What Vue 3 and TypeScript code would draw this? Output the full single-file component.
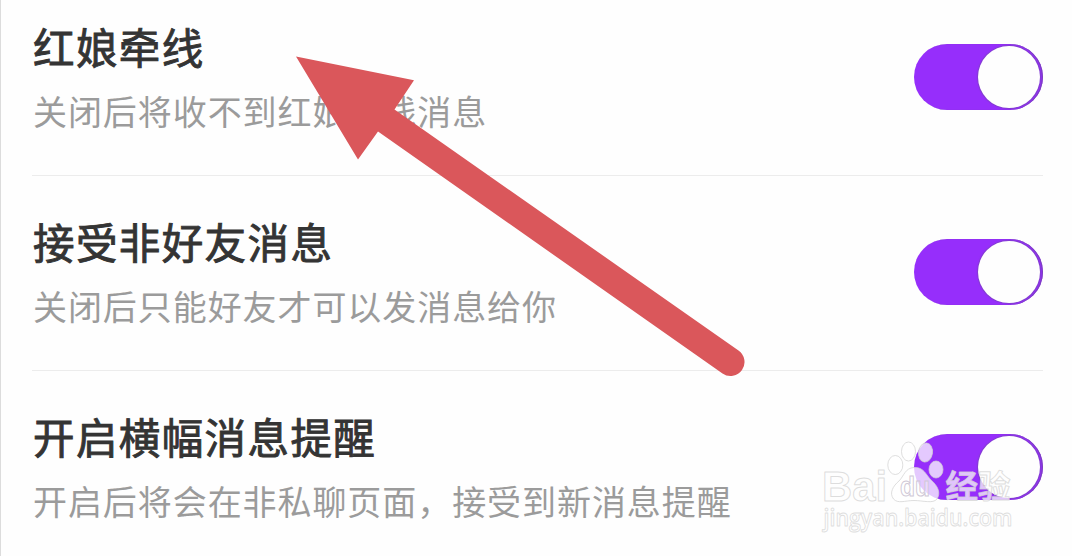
<script setup lang="ts">
import { ref } from 'vue'

interface Setting {
  title: string
  description: string
  enabled: boolean
}

const settings = ref<Setting[]>([
  { title: '红娘牵线', description: '关闭后将收不到红娘牵线消息', enabled: true },
  { title: '接受非好友消息', description: '关闭后只能好友才可以发消息给你', enabled: true },
  { title: '开启横幅消息提醒', description: '开启后将会在非私聊页面，接受到新消息提醒', enabled: true },
])
</script>

<template>
  <main class="page">
    <section v-for="item in settings" :key="item.title" class="row">
      <div class="copy">
        <h2 class="title">{{ item.title }}</h2>
        <p class="description">{{ item.description }}</p>
      </div>
      <button
        class="toggle"
        :class="{ on: item.enabled }"
        role="switch"
        :aria-checked="item.enabled"
        :aria-label="item.title"
        @click="item.enabled = !item.enabled"
      >
        <span class="knob"></span>
      </button>
    </section>

    <svg class="arrow" viewBox="0 0 1072 556" aria-hidden="true">
      <path d="M296 56.5 L414 80.3 L394.5 109.5 L738.5 350.5 A14 14 0 0 1 722.5 373.5 L378 131.5 L358 159.5 Z" />
    </svg>

    <svg class="watermark" viewBox="800 420 272 136" aria-hidden="true">
      <g class="mark">
        <text x="822" y="500.500" class="latin" textLength="65" lengthAdjust="spacingAndGlyphs">Bai</text>
        <ellipse cx="895.3" cy="465" rx="7.5" ry="9.5" />
        <ellipse cx="908.5" cy="451.500" rx="7" ry="9.5" />
        <ellipse cx="925.500" cy="452.500" rx="7" ry="9.5" transform="rotate(8 925.5 452.5)" />
        <ellipse cx="936" cy="469.500" rx="7" ry="8.500" />
        <path d="M914 467.500 C924 467 926 475 931 480 C938 486 941 493 937 499 C933 504 923 500.500 914 500.500 C905 500.500 898 504 893.500 499 C889 493 893 486 899 481 C904 476 905 468 914 467.500 Z" />
        <text x="945.500" y="497.500" class="han" textLength="65" lengthAdjust="spacingAndGlyphs">经验</text>
        <text x="823.500" y="526" class="url" textLength="189" lengthAdjust="spacingAndGlyphs">jingyan.baidu.com</text>
      </g>
      <text x="900" y="496" class="du" textLength="30" lengthAdjust="spacingAndGlyphs">du</text>
    </svg>
  </main>
</template>

<style>
body {
  margin: 0;
  background: #fefefe;
  overflow: hidden;
}
</style>

<style scoped>
.page {
  position: relative;
  box-sizing: border-box;
  height: 556px;
  padding: 0 29px 0 31px;
  border-left: 1px solid #dcdcdc;
  overflow: hidden;
  background: #fefefe;
  font-family: "Noto Sans CJK SC", sans-serif;
}

.row {
  box-sizing: border-box;
  height: 195px;
  display: flex;
  justify-content: space-between;
  align-items: flex-start;
  border-bottom: 1px solid #ececec;
}

.row:first-child {
  height: 176px;
}

.row:not(:first-child) {
  padding-top: 19px;
}

.copy {
  padding: 16px 0 0 1px;
}

.title {
  margin: 0;
  font-size: 41.5px;
  line-height: 60px;
  font-weight: 400;
  letter-spacing: 1.4px;
  color: #343434;
  -webkit-text-stroke: 0.9px #343434;
  white-space: nowrap;
}

.description {
  margin: 10px 0 0;
  font-size: 34px;
  line-height: 50px;
  font-weight: 400;
  letter-spacing: 0.93px;
  color: #9b9b9b;
  white-space: nowrap;
}

.toggle {
  flex: none;
  display: flex;
  align-items: center;
  width: 129px;
  height: 66px;
  margin: 44.4px 0 0;
  padding: 0 3px 0 2px;
  border: 0;
  border-radius: 33px;
  background: #d5d5d5;
}

.toggle.on {
  justify-content: flex-end;
  background: #962efb;
  box-shadow: inset -1px 0 1px #7843b5;
}

.knob {
  width: 62px;
  height: 62px;
  border-radius: 50%;
  background: #fefefe;
  box-shadow: 0 0 1px 1px rgba(105, 80, 150, 0.45);
}

.arrow {
  position: absolute;
  left: -1px;
  top: 0;
  width: 1072px;
  height: 556px;
  fill: #da575b;
  pointer-events: none;
}

.watermark {
  position: absolute;
  left: 799px;
  top: 420px;
  width: 272px;
  height: 136px;
  pointer-events: none;
}

.mark {
  fill: rgba(255, 255, 255, 0.74);
  stroke: rgba(211, 211, 211, 0.75);
  stroke-width: 1;
  stroke-linejoin: round;
}

.latin,
.du {
  font-family: "Liberation Sans", sans-serif;
  font-weight: 700;
}

.latin {
  font-size: 43px;
}

.du {
  font-size: 27px;
  fill: rgba(255, 255, 255, 0.3);
  stroke: #cfc8d6;
  stroke-width: 1;
}

.han {
  font-family: "Noto Sans CJK SC", sans-serif;
  font-size: 32px;
  font-weight: 700;
}

.url {
  font-family: "Open Sans", sans-serif;
  font-size: 23px;
  font-weight: 600;
  stroke-width: 0.9;
}
</style>
